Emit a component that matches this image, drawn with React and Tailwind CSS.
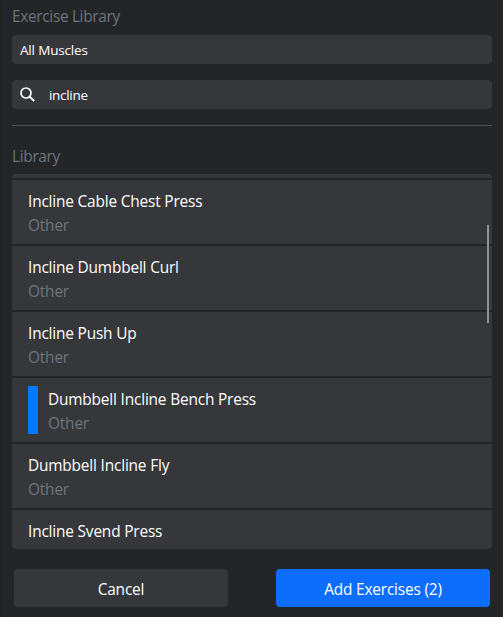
import React from "react";

const exercises = [
  { name: "Incline Cable Chest Press", muscle: "Other" },
  { name: "Incline Dumbbell Curl", muscle: "Other" },
  { name: "Incline Push Up", muscle: "Other" },
  { name: "Dumbbell Incline Bench Press", muscle: "Other", selected: true },
  { name: "Dumbbell Incline Fly", muscle: "Other" },
  { name: "Incline Svend Press" },
];

function ExerciseRow({ name, muscle, selected }) {
  return (
    <li className="flex h-16 shrink-0 bg-[#36373b] px-4 py-2">
      {selected && <span className="mr-2.5 h-12 w-2.5 bg-[#007bff]" />}
      <div className="pt-0.5">
        <div className="leading-6 text-white">{name}</div>
        {muscle && <div className="leading-6 text-[#6c757d]">{muscle}</div>}
      </div>
    </li>
  );
}

export default function App() {
  return (
    <div className="flex h-[617px] w-[503px] flex-col overflow-hidden border-l-2 border-[#202124] bg-[#242527] pr-[11px] pl-2.5 font-['Open_Sans',sans-serif] text-[15.4px] tracking-[-0.17px] whitespace-nowrap">
      <h1 className="mt-[5px] h-6 leading-6 tracking-[-0.32px] text-[#6c757d]">Exercise Library</h1>
      <div className="mt-1.5 flex h-[29px] items-center justify-between rounded bg-[#36373b] pr-[15px] pl-2 text-[13.5px] text-white">
        <span className="pt-0.5">All Muscles</span>
        <svg className="h-3 w-3" viewBox="0 0 16 16" fill="none" stroke="#343a40" strokeWidth="2" strokeLinecap="round" strokeLinejoin="round">
          <path d="m2 5 6 6 6-6" />
        </svg>
      </div>
      <div className="mt-4 flex h-[29px] items-center rounded bg-[#36373b] pl-2 text-[13.5px] text-white">
        <svg className="h-[15px] w-[15px]" viewBox="0 0 15 15" fill="none" stroke="currentColor" strokeWidth="1.7">
          <circle cx="6" cy="6" r="5" />
          <path d="m9.6 9.6 4.6 4.4" strokeWidth="2" />
        </svg>
        <span className="ml-3.5 pt-0.5 tracking-[-0.3px]">incline</span>
      </div>
      <hr className="mt-4 border-t border-[#505153]" />
      <h2 className="mt-[19px] h-6 leading-6 tracking-[-0.32px] text-[#6c757d]">Library</h2>
      <div className="relative mt-[5px] h-[375px] overflow-hidden rounded">
        <ul className="flex flex-col gap-0.5">
          <li className="h-1 shrink-0 bg-[#36373b]" />
          {exercises.map((exercise) => (
            <ExerciseRow key={exercise.name} {...exercise} />
          ))}
        </ul>
        <span className="absolute top-[51px] right-[3px] h-[98px] w-0.5 bg-[#929090]" />
      </div>
      <div className="mt-5 flex justify-between px-0.5 text-white">
        <button className="h-[38px] w-[214px] rounded bg-[#36373b] pt-1">Cancel</button>
        <button className="h-[38px] w-[214px] rounded bg-[#0d6efd] pt-1">Add Exercises (2)</button>
      </div>
    </div>
  );
}
